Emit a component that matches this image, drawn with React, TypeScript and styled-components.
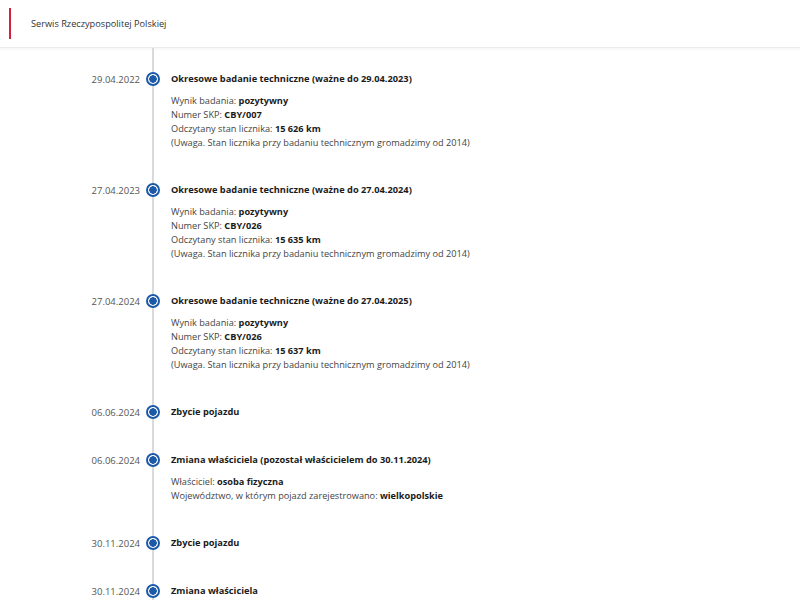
import * as React from 'react';
import styled, { createGlobalStyle } from 'styled-components';

const GlobalStyle = createGlobalStyle`
  html, body {
    margin: 0;
    padding: 0;
    background: #fff;
  }
  body {
    font-family: 'Open Sans', 'Noto Sans', sans-serif;
    color: #1b1b1b;
  }
`;

const Header = styled.header`
  display: flex;
  align-items: center;
  height: 48px;
  padding-left: 9px;
  border-bottom: 1px solid #ececec;
  box-shadow: 0 1px 3px rgba(0, 0, 0, 0.05);
  box-sizing: border-box;
`;

const RedBar = styled.div`
  width: 2px;
  height: 31px;
  background: #d4213d;
`;

const HeaderTitle = styled.span`
  margin-left: 20px;
  font-size: 9.2px;
  color: #333;
`;

const Timeline = styled.div`
  padding-top: 23px;
  padding-bottom: 40px;
  display: flex;
  flex-direction: column;
  gap: 32px;
  background: linear-gradient(#dadada, #dadada) no-repeat 152px 0 / 2px 100%;
`;

const Entry = styled.div`
  display: grid;
  grid-template-columns: 140px 26px 1fr;
  font-size: 9.2px;
`;

const DateCell = styled.div`
  display: flex;
  align-items: center;
  justify-content: flex-end;
  height: 16px;
  font-size: 9.5px;
  color: #555;
`;

const Marker = styled.div`
  display: flex;
  align-items: center;
  justify-content: center;
  height: 16px;
`;

const Dot = styled.span`
  width: 10px;
  height: 10px;
  border-radius: 50%;
  border: 2px solid #1c5aa8;
  background: radial-gradient(circle, #1c5aa8 0 3.5px, #fff 4px);
`;

const Title = styled.div`
  margin-left: 5px;
  line-height: 16px;
  font-size: 9.25px;
  font-weight: 700;
  color: #1b1b1b;
`;

const Details = styled.div`
  grid-column: 3;
  margin: 7px 0 0 5px;
  line-height: 14px;
  color: #444;
`;

const Value = styled.b`
  font-weight: 700;
  color: #1b1b1b;
`;

type Line = { label: string; value?: string };

type Event = {
  date: string;
  title: string;
  lines?: Line[];
};

const note = '(Uwaga. Stan licznika przy badaniu technicznym gromadzimy od 2014)';

const events: Event[] = [
  {
    date: '29.04.2022',
    title: 'Okresowe badanie techniczne (ważne do 29.04.2023)',
    lines: [
      { label: 'Wynik badania: ', value: 'pozytywny' },
      { label: 'Numer SKP: ', value: 'CBY/007' },
      { label: 'Odczytany stan licznika: ', value: '15 626 km' },
      { label: note },
    ],
  },
  {
    date: '27.04.2023',
    title: 'Okresowe badanie techniczne (ważne do 27.04.2024)',
    lines: [
      { label: 'Wynik badania: ', value: 'pozytywny' },
      { label: 'Numer SKP: ', value: 'CBY/026' },
      { label: 'Odczytany stan licznika: ', value: '15 635 km' },
      { label: note },
    ],
  },
  {
    date: '27.04.2024',
    title: 'Okresowe badanie techniczne (ważne do 27.04.2025)',
    lines: [
      { label: 'Wynik badania: ', value: 'pozytywny' },
      { label: 'Numer SKP: ', value: 'CBY/026' },
      { label: 'Odczytany stan licznika: ', value: '15 637 km' },
      { label: note },
    ],
  },
  { date: '06.06.2024', title: 'Zbycie pojazdu' },
  {
    date: '06.06.2024',
    title: 'Zmiana właściciela (pozostał właścicielem do 30.11.2024)',
    lines: [
      { label: 'Właściciel: ', value: 'osoba fizyczna' },
      { label: 'Województwo, w którym pojazd zarejestrowano: ', value: 'wielkopolskie' },
    ],
  },
  { date: '30.11.2024', title: 'Zbycie pojazdu' },
  { date: '30.11.2024', title: 'Zmiana właściciela' },
];

const App: React.FC = () => {
  return (
    <>
      <GlobalStyle />
      <Header>
        <RedBar />
        <HeaderTitle>Serwis Rzeczypospolitej Polskiej</HeaderTitle>
      </Header>
      <Timeline>
        {events.map((ev, i) => (
          <Entry key={i}>
            <DateCell>{ev.date}</DateCell>
            <Marker>
              <Dot />
            </Marker>
            <Title>{ev.title}</Title>
            {ev.lines && (
              <Details>
                {ev.lines.map((l, j) => (
                  <div key={j}>
                    {l.label}
                    {l.value && <Value>{l.value}</Value>}
                  </div>
                ))}
              </Details>
            )}
          </Entry>
        ))}
      </Timeline>
    </>
  );
};

export default App;
